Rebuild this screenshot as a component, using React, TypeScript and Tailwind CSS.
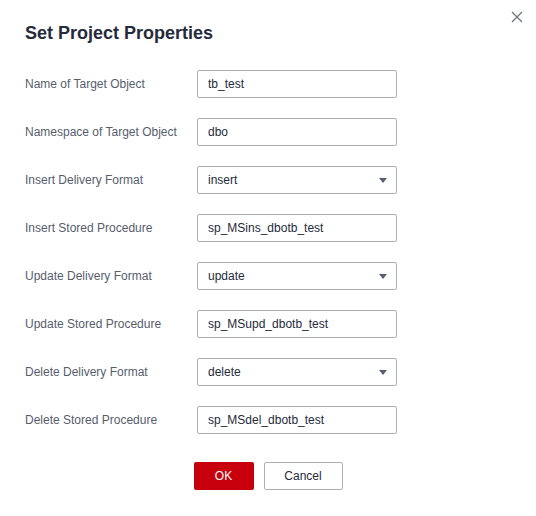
const rows: { label: string; value: string; select?: boolean }[] = [
  { label: "Name of Target Object", value: "tb_test" },
  { label: "Namespace of Target Object", value: "dbo" },
  { label: "Insert Delivery Format", value: "insert", select: true },
  { label: "Insert Stored Procedure", value: "sp_MSins_dbotb_test" },
  { label: "Update Delivery Format", value: "update", select: true },
  { label: "Update Stored Procedure", value: "sp_MSupd_dbotb_test" },
  { label: "Delete Delivery Format", value: "delete", select: true },
  { label: "Delete Stored Procedure", value: "sp_MSdel_dbotb_test" },
];

export default function App() {
  return (
    <div className="relative h-[516px] w-[536px] bg-white font-['Liberation_Sans',Arial,sans-serif]">
      <button className="absolute left-[511px] top-[11px] flex h-[12px] w-[12px] items-center justify-center">
        <svg width="12" height="12" viewBox="0 0 12 12">
          <path d="M1 1 L11 11 M11 1 L1 11" stroke="#6f7380" strokeWidth="1.3" />
        </svg>
      </button>

      <div className="px-[25px] pt-[21px]">
        <h1 className="text-[18px] font-bold leading-[24px] text-[#252b3a]">
          Set Project Properties
        </h1>

        <div className="mt-[25px] flex flex-col gap-[20px]">
          {rows.map((r) => (
            <div key={r.label} className="flex items-center">
              <span className="w-[172px] text-[12px] text-[#575d6c]">{r.label}</span>
              <div className="flex h-[28px] w-[200px] items-center justify-between rounded-[2px] border border-[#adb0b8] px-[10px] text-[12px] text-[#252b3a]">
                <span>{r.value}</span>
                {r.select && (
                  <svg width="8" height="5" viewBox="0 0 8 5" className="mr-[-1px]">
                    <path d="M0 0 H8 L4 5 Z" fill="#575d6c" />
                  </svg>
                )}
              </div>
            </div>
          ))}
        </div>
      </div>

      <div className="mt-[28px] flex justify-center gap-[10px]">
        <button className="h-[28px] w-[60px] rounded-[2px] bg-[#c7000b] text-[12px] text-white">
          OK
        </button>
        <button className="h-[28px] w-[79px] rounded-[2px] border border-[#adb0b8] bg-white text-[12px] text-[#252b3a]">
          Cancel
        </button>
      </div>
    </div>
  );
}
